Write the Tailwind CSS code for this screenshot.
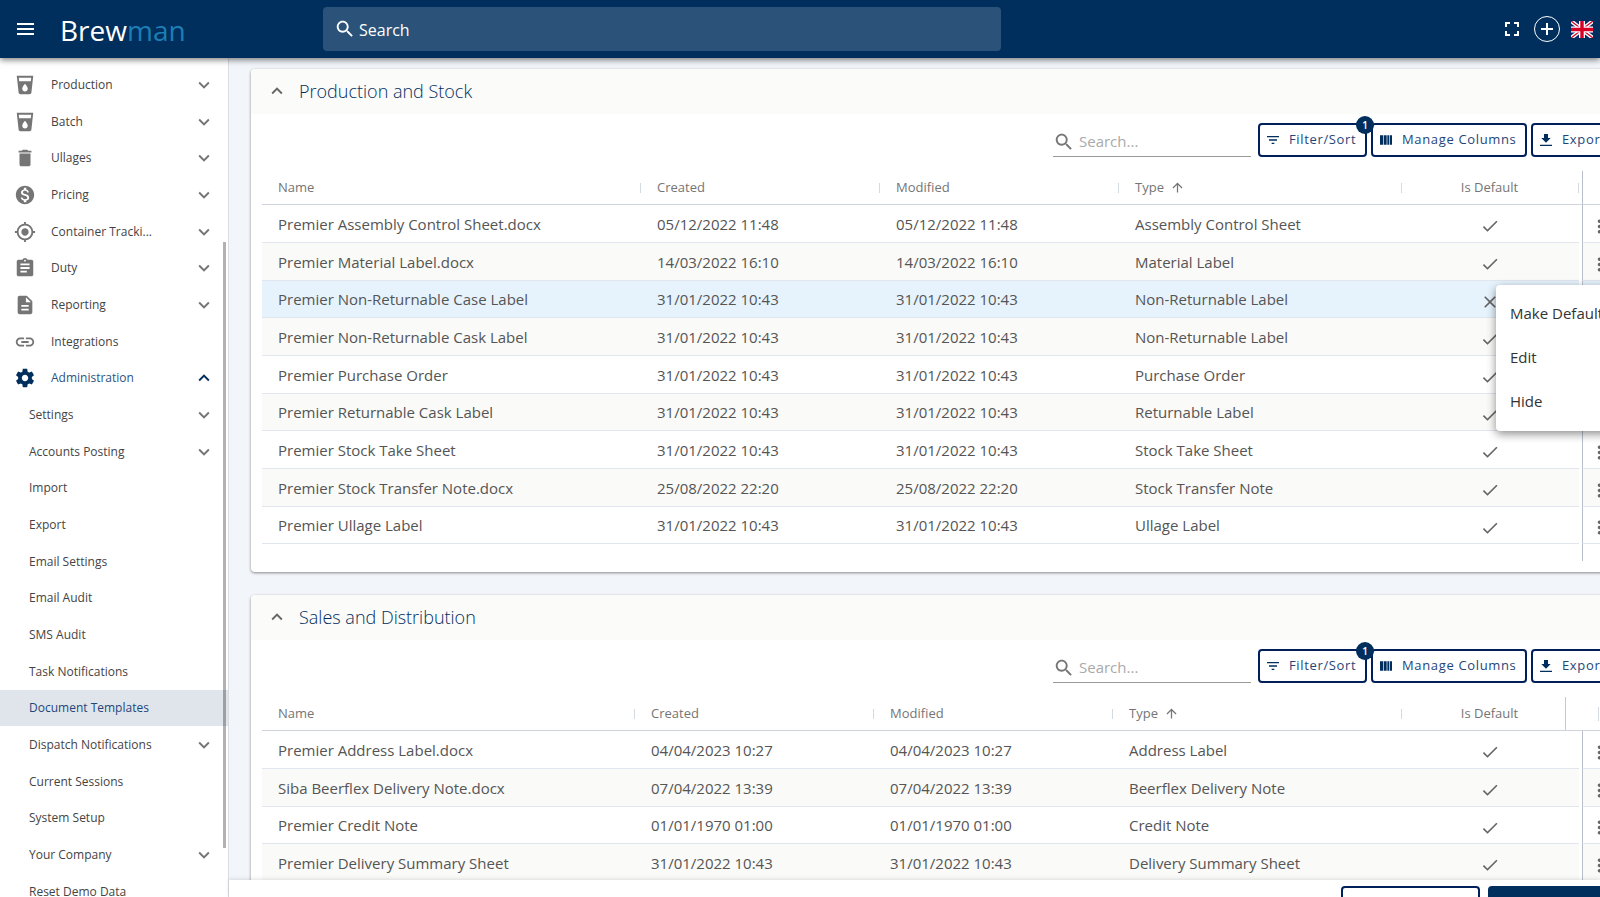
<!DOCTYPE html>
<html lang="en">
<head>
    <meta charset="UTF-8">
    <meta name="viewport" content="width=device-width, initial-scale=1.0">
    <title>Brewman - Document Templates</title>
    <script src="https://cdn.jsdelivr.net/npm/@tailwindcss/browser@4"></script>
</head>
<body class="h-screen flex flex-col overflow-hidden bg-[#f2f5fa] font-['Open_Sans',sans-serif] text-[#555]">

    <!-- Icons -->
    <svg class="hidden">
        <symbol id="i-cup" viewBox="0 0 24 24"><path d="M3 2l2.010 18.230C5.130 21.230 5.970 22 7 22h10c1.030 0 1.870-.770 1.990-1.770L21 2H3zm9 17c-1.660 0-3-1.340-3-3 0-2 3-5.400 3-5.400s3 3.400 3 5.400c0 1.660-1.340 3-3 3zm6.330-11H5.670l-.440-4h13.550l-.450 4z"/></symbol>
        <symbol id="i-bin" viewBox="0 0 24 24"><path d="M6 19c0 1.100.900 2 2 2h8c1.100 0 2-.900 2-2V7H6v12zM19 4h-3.500l-1-1h-5l-1 1H5v2h14V4z"/></symbol>
        <symbol id="i-money" viewBox="0 0 24 24"><path d="M12 2C6.480 2 2 6.480 2 12s4.480 10 10 10 10-4.480 10-10S17.520 2 12 2zm1.410 16.090V20h-2.670v-1.930c-1.710-.360-3.160-1.460-3.270-3.400h1.960c.1 1.050.820 1.870 2.650 1.870 1.960 0 2.400-.980 2.400-1.590 0-.830-.440-1.610-2.670-2.140-2.480-.6-4.180-1.620-4.180-3.670 0-1.720 1.390-2.840 3.110-3.210V4h2.670v1.950c1.860.450 2.790 1.860 2.850 3.390H14.300c-.050-1.110-.640-1.870-2.220-1.870-1.500 0-2.400.680-2.400 1.640 0 .840.650 1.390 2.670 1.910s4.180 1.390 4.180 3.910c-.010 1.830-1.380 2.830-3.120 3.160z"/></symbol>
        <symbol id="i-target" viewBox="0 0 24 24"><path d="M12 8c-2.210 0-4 1.790-4 4s1.790 4 4 4 4-1.790 4-4-1.790-4-4-4zm8.940 3c-.460-4.170-3.770-7.480-7.940-7.940V1h-2v2.060C6.830 3.520 3.520 6.830 3.060 11H1v2h2.060c.460 4.170 3.770 7.480 7.940 7.940V23h2v-2.060c4.170-.460 7.480-3.770 7.940-7.940H23v-2h-2.060zM12 19c-3.870 0-7-3.130-7-7s3.130-7 7-7 7 3.130 7 7-3.130 7-7 7z"/></symbol>
        <symbol id="i-clip" viewBox="0 0 24 24"><path d="M19 3h-4.180C14.400 1.840 13.300 1 12 1c-1.300 0-2.400.840-2.820 2H5c-1.100 0-2 .9-2 2v14c0 1.100.9 2 2 2h14c1.100 0 2-.9 2-2V5c0-1.100-.9-2-2-2zm-7 0c.550 0 1 .450 1 1s-.450 1-1 1-1-.450-1-1 .450-1 1-1zm2 14H7v-2h7v2zm3-4H7v-2h10v2zm0-4H7V7h10v2z"/></symbol>
        <symbol id="i-doc" viewBox="0 0 24 24"><path d="M14 2H6c-1.100 0-1.990.9-1.990 2L4 20c0 1.100.890 2 1.990 2H18c1.100 0 2-.9 2-2V8l-6-6zm2 16H8v-2h8v2zm0-4H8v-2h8v2zm-3-5V3.500L18.500 9H13z"/></symbol>
        <symbol id="i-link" viewBox="0 0 24 24"><path d="M3.900 12c0-1.710 1.390-3.100 3.100-3.100h4V7H7c-2.760 0-5 2.240-5 5s2.240 5 5 5h4v-1.900H7c-1.710 0-3.100-1.390-3.100-3.100zM8 13h8v-2H8v2zm9-6h-4v1.900h4c1.710 0 3.100 1.390 3.100 3.100s-1.390 3.100-3.100 3.100h-4V17h4c2.760 0 5-2.240 5-5s-2.240-5-5-5z"/></symbol>
        <symbol id="i-cog" viewBox="0 0 24 24"><path d="M19.430 12.980c.040-.320.070-.640.070-.980s-.030-.660-.070-.980l2.110-1.650c.190-.150.240-.420.120-.640l-2-3.460c-.120-.220-.390-.3-.610-.220l-2.490 1c-.520-.4-1.080-.730-1.690-.980l-.380-2.650C14.460 2.180 14.250 2 14 2h-4c-.250 0-.460.180-.490.420l-.380 2.650c-.610.250-1.170.590-1.690.980l-2.490-1c-.230-.090-.490 0-.610.220l-2 3.460c-.130.220-.070.490.120.640l2.110 1.650c-.040.320-.070.650-.070.980s.030.660.070.980l-2.110 1.650c-.190.150-.240.420-.120.640l2 3.460c.120.220.390.3.610.220l2.490-1c.520.4 1.080.730 1.690.980l.380 2.650c.030.240.240.420.490.420h4c.250 0 .460-.180.490-.420l.380-2.650c.610-.250 1.170-.590 1.690-.980l2.490 1c.230.090.490 0 .610-.220l2-3.460c.120-.220.070-.490-.120-.640l-2.110-1.650zM12 15.500c-1.930 0-3.500-1.570-3.500-3.500s1.570-3.500 3.500-3.500 3.500 1.570 3.500 3.500-1.570 3.500-3.500 3.500z"/></symbol>
        <symbol id="i-down" viewBox="0 0 24 24"><path d="M16.590 8.590L12 13.170 7.410 8.590 6 10l6 6 6-6z"/></symbol>
        <symbol id="i-up" viewBox="0 0 24 24"><path d="M12 8l-6 6 1.410 1.410L12 10.830l4.590 4.580L18 14z"/></symbol>
        <symbol id="i-search" viewBox="0 0 24 24"><path d="M15.500 14h-.790l-.280-.270C15.410 12.590 16 11.110 16 9.500 16 5.910 13.090 3 9.500 3S3 5.910 3 9.500 5.910 16 9.500 16c1.610 0 3.090-.590 4.230-1.570l.270.280v.790l5 4.990L20.490 19l-4.990-5zm-6 0C7.010 14 5 11.990 5 9.500S7.010 5 9.500 5 14 7.010 14 9.500 11.990 14 9.500 14z"/></symbol>
        <symbol id="i-filter" viewBox="0 0 24 24"><path d="M10 18h4v-2h-4v2zM3 6v2h18V6H3zm3 7h12v-2H6v2z"/></symbol>
        <symbol id="i-columns" viewBox="0 0 24 24"><path d="M3 5h5v14H3zM9 5h4v14H9zM14 5h3v14h-3zM18 5h3v14h-3z"/></symbol>
        <symbol id="i-export" viewBox="0 0 24 24"><path d="M19 9h-4V3H9v6H5l7 7 7-7zM3 19v2h18v-2H3z"/></symbol>
        <symbol id="i-arrow" viewBox="0 0 24 24"><path d="M4 12l1.410 1.410L11 7.830V20h2V7.830l5.580 5.590L20 12l-8-8-8 8z"/></symbol>
        <symbol id="i-check" viewBox="0 0 24 24"><path d="M9 16.200L4.800 12l-1.400 1.400L9 19 21 7l-1.400-1.400L9 16.200z"/></symbol>
        <symbol id="i-cross" viewBox="0 0 24 24"><path d="M19 6.410L17.590 5 12 10.590 6.410 5 5 6.410 10.590 12 5 17.590 6.410 19 12 13.410 17.590 19 19 17.590 13.410 12z"/></symbol>
        <symbol id="i-dots" viewBox="0 0 24 24"><path d="M12 8c1.100 0 2-.9 2-2s-.9-2-2-2-2 .9-2 2 .9 2 2 2zm0 2c-1.100 0-2 .9-2 2s.9 2 2 2 2-.9 2-2-.9-2-2-2zm0 6c-1.100 0-2 .9-2 2s.9 2 2 2 2-.9 2-2-.9-2-2-2z"/></symbol>
    </svg>

    <!-- Header -->
    <header class="relative z-20 h-[58px] shrink-0 flex items-center pl-[17px] pr-[7px] bg-[#002e5d] text-white shadow-[0_2px_6px_rgba(0,0,0,0.5)]">
        <button type="button" aria-label="Menu">
            <svg class="w-[17px] h-3 fill-white" viewBox="0 0 17 12"><path d="M0 0h17v2H0zM0 5h17v2H0zM0 10h17v2H0z"/></svg>
        </button>
        <a href="#" class="ml-[26px] w-[263px] flex pt-px text-[28px] leading-10">
            <span>Brew</span><span class="text-[#1c7fb5]">man</span>
        </a>
        <label class="w-[43%] h-11 flex items-center gap-[3px] pl-[11px] rounded bg-[#2b5278]">
            <svg class="size-[22px] fill-white"><use href="#i-search"/></svg>
            <input type="text" aria-label="Search" placeholder="Search" class="flex-1 pt-[2px] text-base outline-none placeholder:text-white">
        </label>
        <div class="ml-auto flex items-center">
            <button type="button" aria-label="Full screen">
                <svg class="size-[14px] fill-white" viewBox="0 0 14 14"><path d="M0 0h5v2H2v3H0zM9 0h5v5h-2V2H9zM0 9h2v3h3v2H0zM12 9h2v5H9v-2h3z"/></svg>
            </button>
            <button type="button" aria-label="Add" class="ml-[15px] size-[26px] flex items-center justify-center rounded-full border border-white">
                <svg class="size-3 fill-white" viewBox="0 0 12 12"><path d="M5 0h2v5h5v2H7v5H5V7H0V5h5z"/></svg>
            </button>
            <button type="button" aria-label="Language" class="ml-[11px]">
                <svg class="w-[22px] h-[17px]" viewBox="0 0 22 17">
                    <rect width="22" height="17" fill="#0b2a6b"/>
                    <path d="M0 0l22 17M22 0L0 17" stroke="#fff" stroke-width="4"/>
                    <path d="M0 0l22 17M22 0L0 17" stroke="#d80027" stroke-width="1.300"/>
                    <path d="M11 0v17M0 8.500h22" stroke="#fff" stroke-width="6"/>
                    <path d="M11 0v17M0 8.500h22" stroke="#d80027" stroke-width="3.400"/>
                </svg>
            </button>
        </div>
    </header>

    <div class="flex-1 min-h-0 flex">
        <!-- Sidebar -->
        <aside class="relative w-[229px] shrink-0 overflow-hidden bg-white border-r border-[#d9dce1] pt-2">
            <nav><ul id="menu" class="text-xs"></ul></nav>
            <div class="absolute right-[2px] top-[184px] w-[3px] h-[606px] bg-black/30"></div>
        </aside>

        <!-- Main Content -->
        <main class="flex-1 min-w-0 flex flex-col">
            <div class="relative flex-1 min-h-0 overflow-hidden pl-[22px] pt-[11px]">
                <div id="cards" class="-mr-[27px] space-y-[23px]"></div>

                <!-- Row menu -->
                <ul role="menu" class="absolute z-10 right-[-20px] top-[227px] w-[124px] pt-[6px] pb-2 rounded bg-white text-[15px] text-[#333] shadow-[0_3px_10px_rgba(0,0,0,0.45)]">
                    <li><button type="button" role="menuitem" class="w-full h-11 pl-[14px] text-left whitespace-nowrap">Make Default</button></li>
                    <li><button type="button" role="menuitem" class="w-full h-11 pl-[14px] text-left">Edit</button></li>
                    <li><button type="button" role="menuitem" class="w-full h-11 pl-[14px] text-left">Hide</button></li>
                </ul>
            </div>

            <!-- Action bar -->
            <footer class="relative h-[17px] shrink-0 flex justify-end gap-2 overflow-hidden bg-white pt-[6px] shadow-[0_-1px_4px_rgba(0,0,0,0.12)]">
                <button type="button" aria-label="Cancel" class="w-[139px] h-9 rounded border-2 border-[#00205b] bg-white"></button>
                <button type="button" aria-label="Save" class="-mr-7 w-[140px] h-9 rounded bg-[#002e5d]"></button>
            </footer>
        </main>
    </div>

<script>
    // label, icon (top level only), arrow
    const menu = [
        ['Production', 'cup', 'down'],
        ['Batch', 'cup', 'down'],
        ['Ullages', 'bin', 'down'],
        ['Pricing', 'money', 'down'],
        ['Container Tracki...', 'target', 'down'],
        ['Duty', 'clip', 'down'],
        ['Reporting', 'doc', 'down'],
        ['Integrations', 'link', ''],
        ['Administration', 'cog', 'up'],
        ['Settings', '', 'down'],
        ['Accounts Posting', '', 'down'],
        ['Import', '', ''],
        ['Export', '', ''],
        ['Email Settings', '', ''],
        ['Email Audit', '', ''],
        ['SMS Audit', '', ''],
        ['Task Notifications', '', ''],
        ['Document Templates', '', ''],
        ['Dispatch Notifications', '', 'down'],
        ['Current Sessions', '', ''],
        ['System Setup', '', ''],
        ['Your Company', '', 'down'],
        ['Reset Demo Data', '', '']
    ];

    document.getElementById('menu').innerHTML = menu.map(([label, icon, arrow]) => {
        let color = 'text-[#444] fill-[#757575]';
        if (label === 'Administration') color = 'text-[#2d5380] fill-[#002e5d]';
        if (label === 'Document Templates') color = 'text-[#1f467a] bg-[#e0e5ec]';
        return `
        <li class="h-[37px] nth-[3n]:h-[36px]">
            <a href="#" class="h-full flex items-center pr-[13px] ${icon ? 'pl-[14px]' : 'pl-[29px]'} ${color}">
                ${icon ? `<svg class="size-[22px] mr-[15px]"><use href="#i-${icon}"/></svg>` : ''}
                <span class="flex-1">${label}</span>
                ${arrow ? `<svg class="size-[22px]"><use href="#i-${arrow}"/></svg>` : ''}
            </a>
        </li>`;
    }).join('');

    const cards = [
        {
            title: 'Production and Stock',
            nameCol: 'w-[379px]',
            selected: 2,
            rows: [
                ['Premier Assembly Control Sheet.docx', '05/12/2022 11:48', 'Assembly Control Sheet'],
                ['Premier Material Label.docx', '14/03/2022 16:10', 'Material Label'],
                ['Premier Non-Returnable Case Label', '31/01/2022 10:43', 'Non-Returnable Label'],
                ['Premier Non-Returnable Cask Label', '31/01/2022 10:43', 'Non-Returnable Label'],
                ['Premier Purchase Order', '31/01/2022 10:43', 'Purchase Order'],
                ['Premier Returnable Cask Label', '31/01/2022 10:43', 'Returnable Label'],
                ['Premier Stock Take Sheet', '31/01/2022 10:43', 'Stock Take Sheet'],
                ['Premier Stock Transfer Note.docx', '25/08/2022 22:20', 'Stock Transfer Note'],
                ['Premier Ullage Label', '31/01/2022 10:43', 'Ullage Label']
            ]
        },
        {
            title: 'Sales and Distribution',
            nameCol: 'w-[373px]',
            selected: -1,
            rows: [
                ['Premier Address Label.docx', '04/04/2023 10:27', 'Address Label'],
                ['Siba Beerflex Delivery Note.docx', '07/04/2022 13:39', 'Beerflex Delivery Note'],
                ['Premier Credit Note', '01/01/1970 01:00', 'Credit Note'],
                ['Premier Delivery Summary Sheet', '31/01/2022 10:43', 'Delivery Summary Sheet']
            ]
        }
    ];

    const sep = '<span class="absolute right-0 top-3 w-px h-[10px] bg-[#d5dae2]"></span>';
    const button = 'relative h-[34px] flex items-center rounded border-2 border-[#00205b] pl-[5px] gap-2 whitespace-nowrap';

    document.getElementById('cards').innerHTML = cards.map((card, c) => `
        <section class="rounded bg-white pb-[11px] shadow-[0_1px_3px_rgba(0,0,0,0.45)]">
            <h2 class="h-[45px] flex items-center gap-[11px] pl-[15px] pb-[2px] rounded-t bg-[#fbfbf9] font-light text-lg text-[#002e5d]">
                <button type="button" aria-label="Collapse"><svg class="size-[22px] fill-[#666]"><use href="#i-up"/></svg></button>
                ${card.title}
            </h2>
            <div class="h-[57px] flex items-start justify-end pt-[9px] text-[13px] tracking-wider text-[#1f467a]">
                <label class="w-[198px] h-[34px] mr-[7px] flex items-center gap-1 border-b border-[#999] pt-1 text-[15px] tracking-normal">
                    <svg class="size-[22px] shrink-0 fill-[#757575]"><use href="#i-search"/></svg>
                    <input type="text" aria-label="Search ${card.title}" placeholder="Search..." class="w-40 outline-none placeholder:text-[#aaa]">
                </label>
                <button type="button" class="${button} w-[109px] mr-1">
                    <svg class="size-4 shrink-0 fill-[#002e5d]"><use href="#i-filter"/></svg>Filter/Sort
                    <span class="absolute z-10 -right-[9px] -top-[9px] size-[18px] rounded-full bg-[#002e5d] text-[10px] leading-[18px] font-semibold tracking-normal text-center text-white">1</span>
                </button>
                <button type="button" class="${button} w-[156px] mr-1">
                    <svg class="size-4 shrink-0 fill-[#002e5d]"><use href="#i-columns"/></svg>Manage Columns
                </button>
                <button type="button" class="${button} w-[96px]">
                    <svg class="size-4 shrink-0 fill-[#002e5d]"><use href="#i-export"/></svg>Export
                </button>
            </div>
            <div class="px-[11px]">
                <table class="w-full table-fixed border-separate border-spacing-0 text-left text-[15px]">
                    <thead class="text-[13px] text-[#757575]">
                        <tr class="h-[34px] *:relative *:p-0 *:border-b *:border-[#cfd4dc] *:font-normal">
                            <th class="${card.nameCol}"><span class="pl-4">Name</span>${sep}</th>
                            <th class="w-[239px]"><span class="pl-4">Created</span>${sep}</th>
                            <th class="w-[239px]"><span class="pl-4">Modified</span>${sep}</th>
                            <th><span class="pl-4 flex items-center gap-[6px]">Type <svg class="size-[15px] fill-[#757575]"><use href="#i-arrow"/></svg></span>${sep}</th>
                            <th class="w-[177px] text-center"><span class="pr-[2px]">Is Default</span>${c === 0 ? sep : '<span class="absolute right-[13px] top-0 w-px h-full bg-[#c3c8d2]"></span>'}</th>
                            <th class="w-[3px]"></th>
                            <th class="w-[34px] ${c === 0 ? 'border-l border-l-[#b9bfca]!' : ''}">${c === 0 ? '' : '<span class="absolute left-4 top-[10px] w-px h-[14px] bg-[#d5dae2]"></span>'}</th>
                        </tr>
                    </thead>
                    <tbody>
                        ${card.rows.map(([name, date, type], i) => {
                            const bg = i === card.selected ? '*:bg-[#e6f3fd]' : i % 2 ? '*:bg-[#fafaf8]' : '';
                            return `
                        <tr class="h-[38px] nth-[3n]:h-[37px] *:pt-px *:pb-0 *:border-b *:border-[#e0e5ee] ${bg}">
                            <td class="pl-4">${name}</td>
                            <td class="pl-4">${date}</td>
                            <td class="pl-4">${date}</td>
                            <td class="pl-4">${type}</td>
                            <td class="pr-[2px]"><svg class="mx-auto mt-1 size-5 fill-[#666]"><use href="#i-${i === card.selected ? 'cross' : 'check'}"/></svg></td>
                            <td class="bg-white! border-b-0!"></td>
                            <td class="border-l border-l-[#b9bfca]! pl-[6px]"><button type="button" aria-label="Row actions" class="block"><svg class="mt-1 size-[21px] fill-[#666]"><use href="#i-dots"/></svg></button></td>
                        </tr>`;
                        }).join('')}
                        <tr class="h-[17px]"><td colspan="6"></td><td class="p-0 border-l border-[#b9bfca]"></td></tr>
                    </tbody>
                </table>
            </div>
        </section>`).join('');
</script>
</body>
</html>
